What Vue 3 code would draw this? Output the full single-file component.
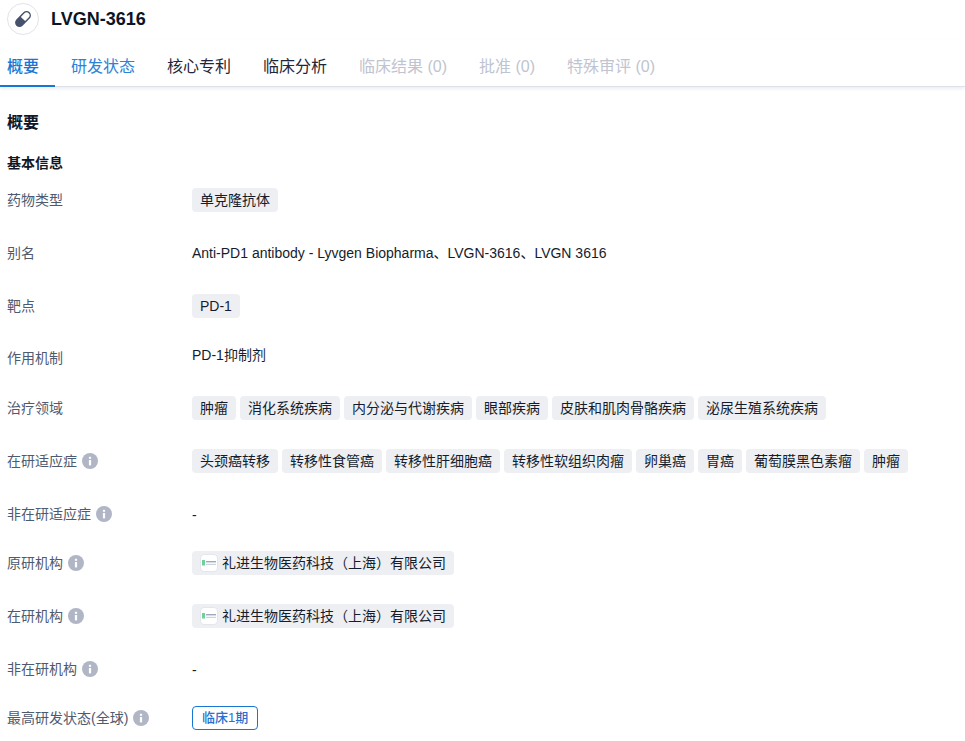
<script setup>
const tabs = [
  { name: '概要', state: 'active' },
  { name: '研发状态', state: 'link' },
  { name: '核心专利', state: '' },
  { name: '临床分析', state: '' },
  { name: '临床结果 (0)', state: 'off' },
  { name: '批准 (0)', state: 'off' },
  { name: '特殊审评 (0)', state: 'off' },
]
const org = '礼进生物医药科技（上海）有限公司'
const rows = [
  { label: '药物类型', h: 53, tags: ['单克隆抗体'] },
  { label: '别名', h: 53, text: 'Anti-PD1 antibody - Lyvgen Biopharma、LVGN-3616、LVGN 3616' },
  { label: '靶点', h: 52, tags: ['PD-1'] },
  { label: '作用机制', h: 50, text: 'PD-1抑制剂', high: true },
  { label: '治疗领域', h: 53, tags: ['肿瘤', '消化系统疾病', '内分泌与代谢疾病', '眼部疾病', '皮肤和肌肉骨骼疾病', '泌尿生殖系统疾病'] },
  { label: '在研适应症', h: 53, info: true, tags: ['头颈癌转移', '转移性食管癌', '转移性肝细胞癌', '转移性软组织肉瘤', '卵巢癌', '胃癌', '葡萄膜黑色素瘤', '肿瘤'] },
  { label: '非在研适应症', h: 49, info: true, text: '-', dash: true },
  { label: '原研机构', h: 53, info: true, org },
  { label: '在研机构', h: 53, info: true, org },
  { label: '非在研机构', h: 49, info: true, text: '-', dash: true },
  { label: '最高研发状态(全球)', h: 35, info: true, status: '临床1期' },
]
</script>

<template>
  <div class="page">
    <header class="head">
      <span class="avatar">
        <svg width="20" height="20" viewBox="0 0 20 20">
          <g transform="rotate(-45 10 10)">
            <rect x="0.6" y="5.6" width="18.8" height="8.8" rx="4.4" fill="#46526b" />
            <path d="M10 7h5a3 3 0 0 1 0 6h-5z" fill="#fff" />
          </g>
        </svg>
      </span>
      <h1 class="title">LVGN-3616</h1>
    </header>

    <nav class="tabs">
      <span v-for="t in tabs" :key="t.name" class="tab" :class="t.state">{{ t.name }}</span>
    </nav>

    <main class="body">
      <h2 class="section">概要</h2>
      <h3 class="sub">基本信息</h3>
      <div class="rows">
        <div
          v-for="r in rows"
          :key="r.label"
          class="row"
          :style="{ height: r.h + 'px' }"
        >
          <div class="label">
            <span>{{ r.label }}</span>
            <svg v-if="r.info" class="info" width="16" height="16" viewBox="0 0 16 16">
              <circle cx="8" cy="8" r="8" fill="#b0b6c5" />
              <rect x="6.9" y="7" width="2.2" height="5.4" fill="#fff" />
              <rect x="6.9" y="3.8" width="2.2" height="2" fill="#fff" />
            </svg>
          </div>
          <div class="value">
            <template v-if="r.tags">
              <span v-for="t in r.tags" :key="t" class="tag">{{ t }}</span>
            </template>
            <span v-else-if="r.org" class="tag org">
              <span class="logo">
                <svg width="14" height="6" viewBox="0 0 14 6">
                  <rect x="0" y="0" width="3" height="5.5" fill="#6fd09a" />
                  <rect x="4" y="1" width="10" height="1.4" fill="#9fa8c0" />
                  <rect x="4" y="3.8" width="10" height="1" fill="#c3cad6" />
                </svg>
              </span>{{ r.org }}
            </span>
            <span v-else-if="r.status" class="status">{{ r.status }}</span>
            <span v-else class="text" :class="{ high: r.high, dash: r.dash }">{{ r.text }}</span>
          </div>
        </div>
      </div>
    </main>
  </div>
</template>

<style scoped>
.page {
  width: 965px;
  height: 741px;
  overflow: hidden;
  background: #fff;
  font-family: "Liberation Sans", "Noto Sans CJK SC", sans-serif;
  font-size: 14px;
  color: #0f1729;
}
.head {
  height: 40px;
  padding: 3px 0 0 7px;
  box-sizing: border-box;
  display: flex;
  align-items: flex-start;
  gap: 12px;
}
.avatar {
  width: 32px;
  height: 32px;
  box-sizing: border-box;
  border: 1px solid #e1e3ea;
  border-radius: 50%;
  display: flex;
  align-items: center;
  justify-content: center;
}
.title {
  margin: 0;
  font-size: 18px;
  line-height: 32px;
  font-weight: 700;
  color: #0d1425;
}
.tabs {
  height: 47px;
  display: flex;
  box-shadow: inset 0 -1px 0 #dfe1e9, 0 2px 3px rgba(210, 214, 225, 0.4);
}
.tab {
  height: 47px;
  box-sizing: border-box;
  padding: 0 16px;
  font-size: 16px;
  line-height: 53px;
  color: #1f2738;
}
.tab:first-child {
  padding-left: 7px;
}
.tab.active {
  color: #1976d2;
  font-weight: 500;
  box-shadow: inset 0 -2px 0 #1976d2;
}
.tab.link {
  color: #2b82d9;
}
.tab.off {
  color: #bfc4d0;
}
.body {
  padding: 25px 0 0 7px;
}
.section {
  margin: 0;
  font-size: 16px;
  line-height: 22px;
  font-weight: 700;
  color: #0f1729;
}
.sub {
  margin: 20px 0 0;
  font-size: 14px;
  line-height: 18px;
  font-weight: 700;
  color: #0f1729;
}
.rows {
  margin-top: 16px;
}
.row {
  display: flex;
  align-items: flex-start;
}
.label {
  width: 185px;
  flex: none;
  height: 23px;
  display: flex;
  align-items: center;
  gap: 5px;
  color: #4e5a70;
}
.label > span {
  line-height: 22px;
}
.info {
  flex: none;
}
.value {
  display: flex;
  gap: 4px;
  align-items: center;
  min-height: 24px;
}
.tag {
  height: 24px;
  line-height: 24px;
  padding: 0 8px;
  border-radius: 4px;
  background: #edeff3;
  color: #151c2c;
  white-space: nowrap;
}
.org {
  display: inline-flex;
  align-items: center;
}
.logo {
  width: 18px;
  height: 18px;
  margin-right: 4px;
  box-sizing: border-box;
  border: 1px solid #e4e6ec;
  border-radius: 4px;
  background: #fff;
  display: flex;
  align-items: center;
  justify-content: center;
}
.status {
  height: 24px;
  box-sizing: border-box;
  font-size: 13px;
  line-height: 22px;
  padding: 0 9px;
  border: 1px solid #1976d2;
  border-radius: 4px;
  color: #2a6fd0;
  font-weight: 500;
}
.text {
  color: #151c2c;
  line-height: 24px;
  white-space: nowrap;
}
.text.high {
  margin-top: -6px;
}
.text.dash {
  margin-top: 1px;
}
</style>
